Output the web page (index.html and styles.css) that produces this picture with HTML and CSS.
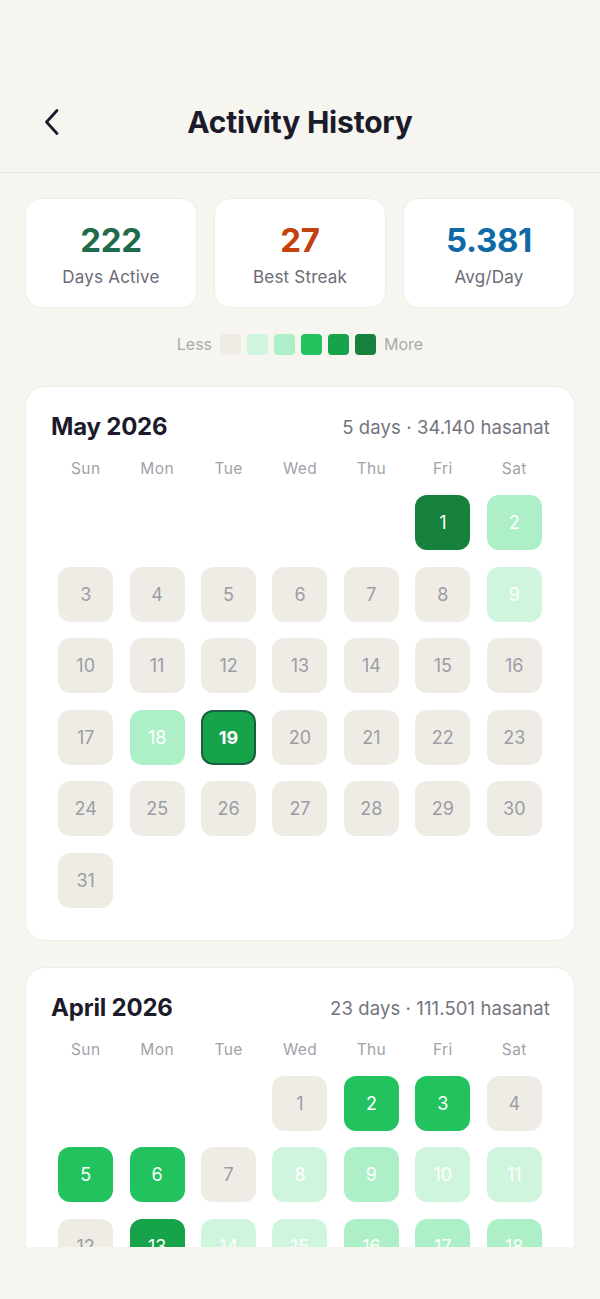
FILE: index.html
```html
<!DOCTYPE html>
<html>
<head>
<meta charset="utf-8">
<link rel="stylesheet" href="styles.css">
</head>
<body>
<div class="screen">
  <header class="header">
    <button class="back" aria-label="Back">
      <svg width="28" height="28" viewBox="0 0 28 28" fill="none"><polyline points="17,2.5 6.5,14 17,25.5" stroke="#1b1b2b" stroke-width="2.8" stroke-linecap="round" stroke-linejoin="round"/></svg>
    </button>
    <h1 class="title">Activity History</h1>
    <span class="spacer"></span>
  </header>
  <main class="content">
    <section class="stats">
      <div class="stat"><div class="stat-num green">222</div><div class="stat-label">Days Active</div></div>
      <div class="stat"><div class="stat-num orange">27</div><div class="stat-label">Best Streak</div></div>
      <div class="stat"><div class="stat-num blue">5.381</div><div class="stat-label">Avg/Day</div></div>
    </section>
    <div class="legend">
      <span class="legend-text">Less</span>
      <span class="sq l0"></span><span class="sq l1"></span><span class="sq l2"></span><span class="sq l3"></span><span class="sq l4"></span><span class="sq l5"></span>
      <span class="legend-text">More</span>
    </div>

    <section class="month">
      <div class="month-head">
        <h2 class="month-title">May 2026</h2>
        <span class="month-sub">5 days · 34.140 hasanat</span>
      </div>
      <div class="weekdays"><span>Sun</span><span>Mon</span><span>Tue</span><span>Wed</span><span>Thu</span><span>Fri</span><span>Sat</span></div>
      <div class="grid">
        <span class="blank"></span><span class="blank"></span><span class="blank"></span><span class="blank"></span><span class="blank"></span>
        <span class="day l5">1</span><span class="day l2">2</span>
        <span class="day l0">3</span><span class="day l0">4</span><span class="day l0">5</span><span class="day l0">6</span><span class="day l0">7</span><span class="day l0">8</span><span class="day l1">9</span>
        <span class="day l0">10</span><span class="day l0">11</span><span class="day l0">12</span><span class="day l0">13</span><span class="day l0">14</span><span class="day l0">15</span><span class="day l0">16</span>
        <span class="day l0">17</span><span class="day l2">18</span><span class="day l4 today">19</span><span class="day l0">20</span><span class="day l0">21</span><span class="day l0">22</span><span class="day l0">23</span>
        <span class="day l0">24</span><span class="day l0">25</span><span class="day l0">26</span><span class="day l0">27</span><span class="day l0">28</span><span class="day l0">29</span><span class="day l0">30</span>
        <span class="day l0">31</span>
      </div>
    </section>

    <section class="month">
      <div class="month-head">
        <h2 class="month-title">April 2026</h2>
        <span class="month-sub">23 days · 111.501 hasanat</span>
      </div>
      <div class="weekdays"><span>Sun</span><span>Mon</span><span>Tue</span><span>Wed</span><span>Thu</span><span>Fri</span><span>Sat</span></div>
      <div class="grid">
        <span class="blank"></span><span class="blank"></span><span class="blank"></span>
        <span class="day l0">1</span><span class="day l3">2</span><span class="day l3">3</span><span class="day l0">4</span>
        <span class="day l3">5</span><span class="day l3">6</span><span class="day l0">7</span><span class="day l1">8</span><span class="day l2">9</span><span class="day l1">10</span><span class="day l1">11</span>
        <span class="day l0">12</span><span class="day l4">13</span><span class="day l1">14</span><span class="day l1">15</span><span class="day l2">16</span><span class="day l2">17</span><span class="day l2">18</span>
        <span class="day l1">19</span><span class="day l2">20</span><span class="day l1">21</span><span class="day l3">22</span><span class="day l1">23</span><span class="day l2">24</span><span class="day l1">25</span>
        <span class="day l0">26</span><span class="day l1">27</span><span class="day l0">28</span><span class="day l2">29</span><span class="day l0">30</span>
      </div>
    </section>
  </main>
</div>
</body>
</html>
```

FILE: styles.css
```css
* { box-sizing: border-box; }
html, body { margin: 0; padding: 0; }
body {
  background: #f6f5f0;
  font-family: Inter, "Noto Sans", "Liberation Sans", sans-serif;
  color: #1b1b2b;
  width: 600px;
  height: 1299px;
  overflow: hidden;
}
.screen {
  height: 1247px;
  overflow: hidden;
}
.header {
  display: grid;
  grid-template-columns: 1fr auto 1fr;
  align-items: center;
  padding: 100px 40px 28px 40px;
  height: 173px;
  border-bottom: 1px solid #ebe9e2;
}
.back {
  width: 28px;
  height: 44px;
  border: 0;
  padding: 0;
  background: none;
  display: flex;
  align-items: center;
  justify-content: center;
}
.title {
  margin: 0;
  font-size: 30px;
  font-weight: 700;
  line-height: 44px;
  letter-spacing: -0.2px;
  color: #1b1b2b;
}
.spacer { width: 28px; }

.content {
  padding: 25px 25px 0;
}
.stats {
  display: flex;
  gap: 17px;
}
.stat {
  flex: 1;
  background: #ffffff;
  border: 1px solid #efede7;
  border-radius: 16px;
  height: 110px;
  padding-top: 21px;
  display: flex;
  flex-direction: column;
  align-items: center;
}
.stat-num {
  font-size: 33px;
  font-weight: 700;
  line-height: 40px;
  letter-spacing: -0.3px;
}
.green { color: #1d6b4a; }
.orange { color: #c2410c; }
.blue { color: #0e6aa6; }
.stat-label {
  margin-top: 7px;
  font-size: 17px;
  line-height: 20px;
  color: #6b6b76;
  letter-spacing: 0.2px;
}

.legend {
  display: flex;
  justify-content: center;
  align-items: center;
  gap: 6px;
  margin-top: 25px;
  height: 22px;
}
.legend-text {
  font-size: 16px;
  color: #a9a9ae;
  margin: 0 2px;
}
.sq {
  width: 21px;
  height: 21px;
  border-radius: 4px;
}

.l0 { background: #efece6; }
.l1 { background: #d0f5de; }
.l2 { background: #adf0c8; }
.l3 { background: #22c35e; }
.l4 { background: #16a34a; }
.l5 { background: #16803d; }

.month {
  background: #ffffff;
  border: 1px solid #efede7;
  border-radius: 20px;
  margin-top: 31px;
  padding: 26px 24px 32px;
}
.month + .month { margin-top: 26px; }
.month-head {
  display: flex;
  justify-content: space-between;
  align-items: center;
  padding-left: 1px;
}
.month-title {
  margin: 0;
  font-size: 24px;
  font-weight: 700;
  line-height: 28px;
  letter-spacing: -0.2px;
  color: #1b1b2b;
}
.month-sub {
  font-size: 18.5px;
  color: #74747e;
  line-height: 28px;
  letter-spacing: 0.1px;
}
.weekdays {
  display: grid;
  grid-template-columns: repeat(7, 1fr);
  margin-top: 19px;
  text-align: center;
  font-size: 15.5px;
  line-height: 18px;
  color: #a2a2a8;
  letter-spacing: 0.4px;
}
.grid {
  display: grid;
  grid-template-columns: repeat(7, 1fr);
  row-gap: 16.5px;
  margin-top: 17px;
  justify-items: center;
}
.blank { width: 55px; height: 55px; }
.day {
  width: 55px;
  height: 55px;
  border-radius: 12px;
  display: flex;
  align-items: center;
  justify-content: center;
  font-size: 18px;
  color: #ffffff;
}
.day.l0 { color: #9c9ca4; }
.day.today {
  border: 2px solid #17603f;
  font-weight: 700;
  font-size: 18px;
}
```
